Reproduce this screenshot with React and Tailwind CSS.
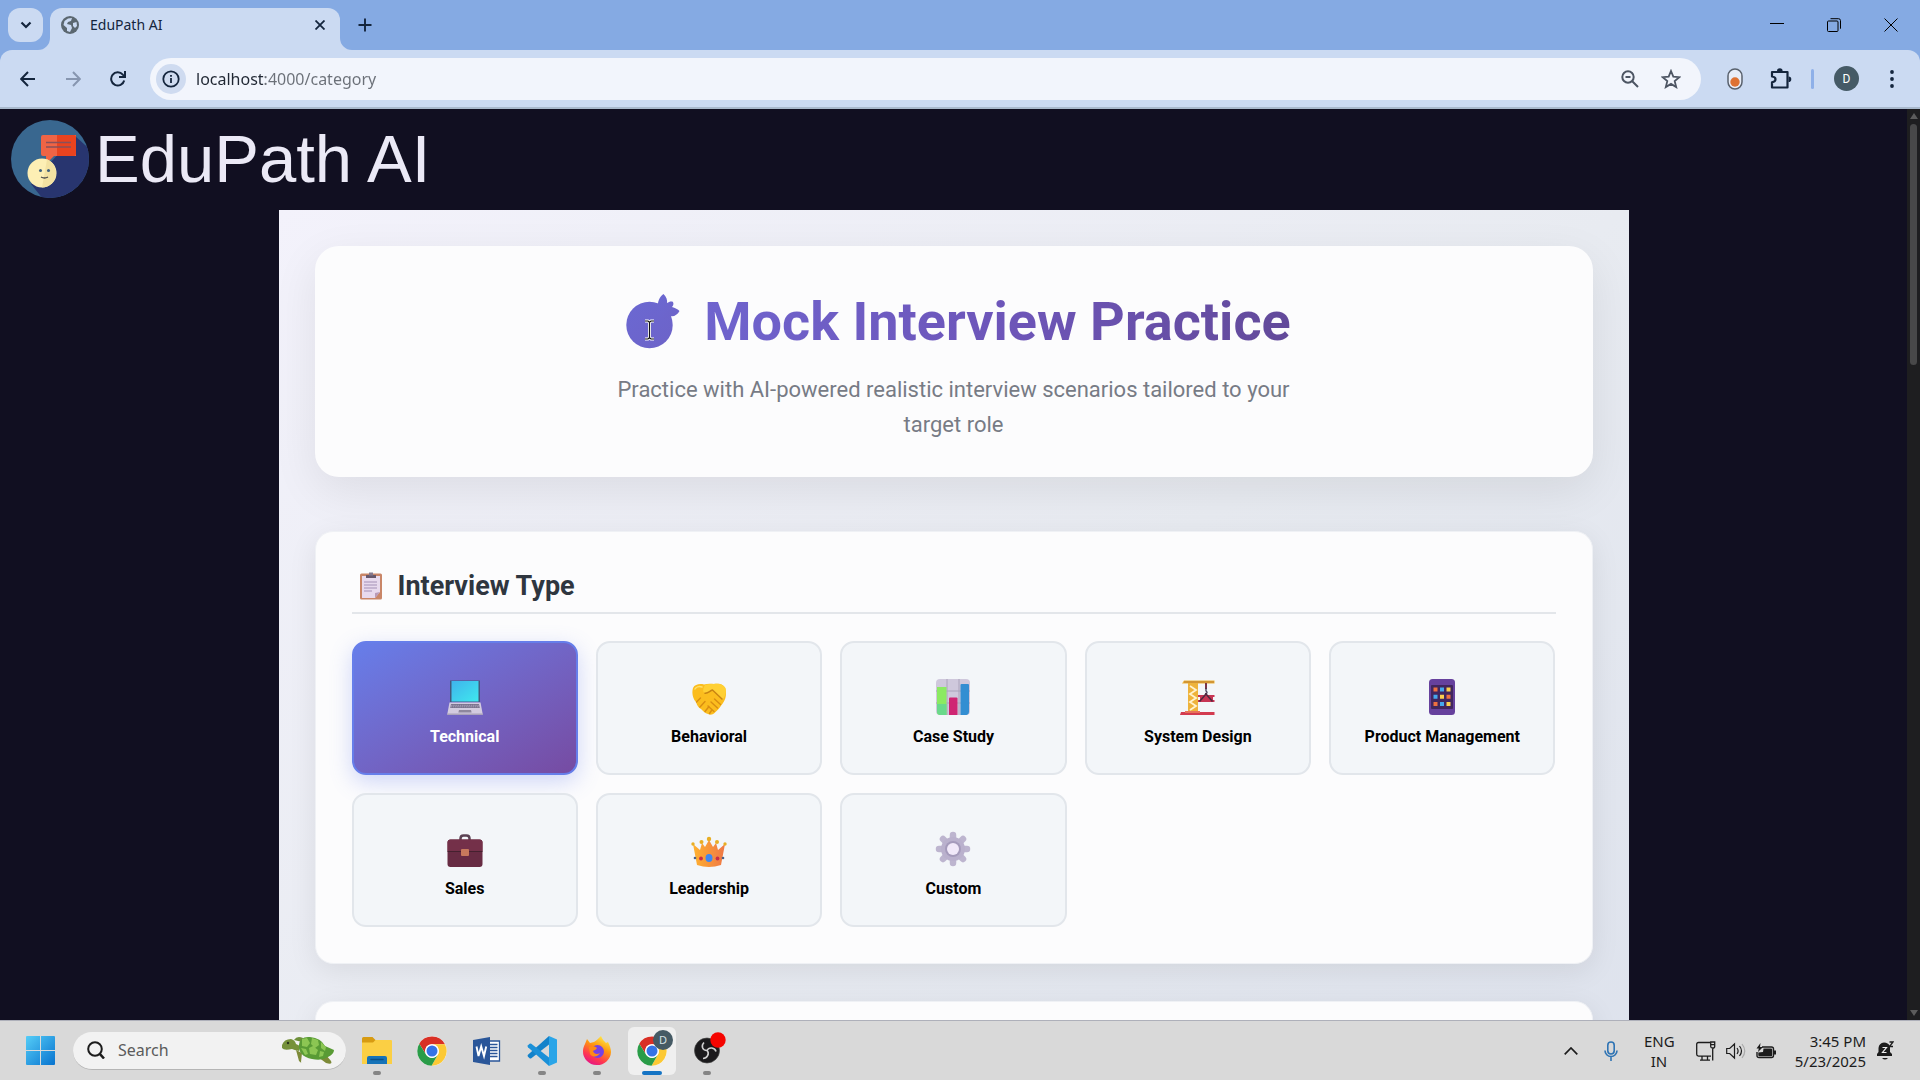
import { useState } from "react";

const LaptopIcon = () => (
  <svg viewBox="0 0 36 36" className="w-9 h-9">
    <defs>
      <linearGradient id="screen" x1="0" y1="0" x2="1" y2="1">
        <stop offset="0" stopColor="#3fb4ec" />
        <stop offset="1" stopColor="#3fe8ee" />
      </linearGradient>
    </defs>
    <path d="M3 1.500h30V23H3z" fill="#43597d" />
    <path d="M4.500 2H31.500v20.500H4.500z" fill="url(#screen)" />
    <path d="M2.500 23.500h31L35.800 35.500H.2z" fill="#d3cbdf" />
    <path d="M4 25h28l.8 4H3.200z" fill="#77708a" />
    <path d="M4 26.300h28M3.600 27.800h29" stroke="#bdb4cb" strokeWidth=".7" strokeDasharray="1.500 .7" />
    <path d="M12 31h12l.6 2.500H11.400z" fill="#8e879d" />
    <path d="M.2 34.500h35.600V36H.2z" fill="#aaa2ba" />
  </svg>
);

const HandshakeIcon = () => (
  <svg viewBox="0 0 36 36" className="w-9 h-9">
    <path d="M2 9c2-4 7-4.500 11-3.500 3-1 7-1 10-.5 5-1 10 0 11.500 5C36 17 34 22 30.500 26c-2 3-4 5.500-7 8-2 2-4.500 2-6.500 1-3-.5-5-3-7-5-3-1.500-4-4-5-7C2 20 .5 14 2 9z" fill="#fbbd1e" />
    <path d="M14 6c-2 3-2.500 7-.5 8 3 1 5-2 8-3l10 10c3-4 4-8 3-12-2-4-7-5-12-4-3-.3-6 0-8.500 1z" fill="#ffd034" />
    <path d="M13.500 14c3 1 5-2 8-3l10 9.500" fill="none" stroke="#c88412" strokeWidth="1.500" />
    <path d="M5.500 23l4-4M9 28l5-5.500M14 32.500l4-5M18.500 34.500l2-3M20 23l6.500 6M23.500 20l6 5.500M17 27l6 5.500" stroke="#d98e12" strokeWidth="1.400" strokeLinecap="round" />
    <path d="M4 10c1-2 4-3 7-2" stroke="#ffe06a" strokeWidth="1.500" fill="none" strokeLinecap="round" />
  </svg>
);

const ChartIcon = () => (
  <svg viewBox="0 0 36 36" className="w-9 h-9">
    <rect x="1" width="34" height="36" rx="4" fill="#cfc8dc" />
    <path d="M12 0v36M24 0v36M1 12h34M1 24h34" stroke="#aaa2ba" />
    <path d="M2 8h9.500v28H4.500Q2 35.500 2 33z" fill="#8bea62" />
    <path d="M2 25h9.500v11H4.500Q2 35.500 2 33z" fill="#6ad98b" />
    <path d="M14 19.500q0-1 1-1h6.500q1 0 1 1V36H14z" fill="#cf2573" />
    <path d="M25.500 6q0-1 1-1H33q1 0 1 1v27q0 2.500-2.500 3h-6z" fill="#338ed2" />
  </svg>
);

const CraneIcon = () => (
  <svg viewBox="0 0 36 36" className="w-9 h-9">
    <path d="M4 1.500h30.500v3H18v29H8v-29H2z" fill="#eeb33b" />
    <path d="M10 7l6 4-6 4 6 4-6 4 6 4-6 4" fill="none" stroke="#fff3cf" strokeWidth="1.800" />
    <path d="M4 3h30" stroke="#b6782c" />
    <path d="M26 4v6" stroke="#7a3547" strokeWidth="2" />
    <path d="M26 9v3c2 1 1 3-1 2.500" fill="none" stroke="#443b56" strokeWidth="1.300" />
    <path d="M18 16h16.500v2H33v3h1.500v2H18v-2h2v-3h-2z" fill="#c83554" />
    <path d="M19.500 22.500L26 15l6.500 7.500" fill="none" stroke="#512840" strokeWidth="1.600" />
    <path d="M1 33h33.500v3H0z" fill="#d33b50" />
    <path d="M5 32h15v2H5z" fill="#e8725a" />
  </svg>
);

const PhoneIcon = () => (
  <svg viewBox="0 0 36 36" className="w-9 h-9">
    <rect x="5" width="26" height="36" rx="3.500" fill="#66419d" />
    <rect x="7" y="6" width="22" height="24" rx="1" fill="#41265d" />
    <path d="M9.500 8.500h4v4h-4zM22.500 15.800h4v4h-4zM9.500 23h4v4h-4z" fill="#ee7040" />
    <path d="M16 8.500h4v4h-4zM9.500 15.800h4v4h-4zM16 23h4v4h-4z" fill="#45a8ed" />
    <path d="M22.500 8.500h4v4h-4zM16 15.800h4v4h-4zM22.500 23h4v4h-4z" fill="#fbd04d" />
  </svg>
);

const BriefcaseIcon = () => (
  <svg viewBox="0 0 36 36" className="w-9 h-9">
    <path d="M13.500 9V7.500q0-3 3-3h3q3 0 3 3V9" fill="none" stroke="#5b4253" strokeWidth="2.500" />
    <rect x=".5" y="8.500" width="35" height="27.500" rx="3" fill="#672b43" />
    <path d="M.5 11.500q0-3 3-3h29q3 0 3 3V20H.5z" fill="#743049" />
    <path d="M.5 20.500h35" stroke="#45202f" strokeWidth="1.200" />
    <rect x="14" y="18" width="8" height="7" rx="1" fill="#c7795c" />
  </svg>
);

const CrownIcon = () => (
  <svg viewBox="0 0 36 36" className="w-9 h-9">
    <defs>
      <linearGradient id="crown" x1="0" x2="1">
        <stop offset="0" stopColor="#ffb22f" />
        <stop offset="1" stopColor="#ef7747" />
      </linearGradient>
    </defs>
    <path d="M2 13l7 6 2-7 3 4 4-7 4 7 3-4 2 7 7-6-4 21q-12 4-24 0z" fill="url(#crown)" />
    <g fill="#e8ae24">
      <circle cx="2" cy="13" r="1.700" />
      <circle cx="10.500" cy="11" r="2" />
      <circle cx="18" cy="8" r="2.200" />
      <circle cx="26" cy="11" r="2" />
      <circle cx="34" cy="13" r="1.700" />
    </g>
    <ellipse cx="18" cy="27" rx="3.500" ry="4" fill="#3e87f1" />
    <circle cx="10" cy="27.500" r="1.900" fill="#c92d48" />
    <circle cx="26.500" cy="27.500" r="1.900" fill="#c92d48" />
    <circle cx="4" cy="27" r="1.300" fill="#4a5f86" />
    <circle cx="32" cy="27" r="1.300" fill="#4a5f86" />
  </svg>
);

const GearIcon = () => (
  <svg viewBox="0 0 36 36" className="w-9 h-9">
    <g stroke="#bdb5cf" strokeWidth="6.500" strokeLinecap="round">
      <path d="M18 4v28M4 18h28M8 8l20 20M28 8L8 28" />
    </g>
    <circle cx="18" cy="18" r="12" fill="#bab1cd" />
    <circle cx="18" cy="18" r="8" fill="#a59bbb" />
    <circle cx="18" cy="18" r="6" fill="#f1e9f9" />
  </svg>
);

const ClipboardIcon = () => (
  <svg viewBox="0 0 22 28" className="w-[22px] h-7">
    <rect y="1.500" width="22" height="26" rx="1.500" fill="#c98668" />
    <path d="M2 4h18v16l-5 6H2z" fill="#e8daee" />
    <path d="M20 20l-5 6v-5z" fill="#b99bb9" />
    <path d="M6 3h10v3H6z" fill="#66586d" />
    <path d="M9 .5h4v3H9z" fill="#85788c" />
    <path d="M4 10h13M4 13h13M4 16h13M4 19h8" stroke="#a48fb6" strokeWidth="1.200" />
  </svg>
);

const TitleIcon = () => (
  <svg viewBox="0 0 54 56" className="w-[54px] h-14">
    <defs>
      <linearGradient id="target" x1="0" y1="0" x2="1" y2="1">
        <stop offset="0" stopColor="#6b68d2" />
        <stop offset="1" stopColor="#6d63c8" />
      </linearGradient>
    </defs>
    <g fill="url(#target)">
      <circle cx="23.500" cy="31" r="23.200" />
      <path d="M32 14c-1-6 2-12 5.500-14 3 3 4 6 3.500 9 2-1 4-2 6-1 1 2 0 4-1 5 3 1 6 2 7.500 4-2 4-6 6-9 5l-6 4-8-6z" />
    </g>
    <path d="M19 27h3l1.500 1.200L25 27h3M19 45h3l1.500-1.200L25 45h3M23.500 28v16" fill="none" stroke="#fff" strokeWidth="3" />
    <path d="M19 27h3l1.500 1.200L25 27h3M19 45h3l1.500-1.200L25 45h3M23.500 28v16" fill="none" stroke="#111" strokeWidth="1.200" />
  </svg>
);

const LogoIcon = () => (
  <svg viewBox="0 0 78 78" className="w-[78px] h-[78px]">
    <clipPath id="logoClip">
      <circle cx="39" cy="39" r="39" />
    </clipPath>
    <g clipPath="url(#logoClip)">
      <path d="M0 0h78v78H0z" fill="#39678f" />
      <path d="M64 16l20 18v50H36L20 64l18-20z" fill="#28356f" />
      <path d="M32 15h33v21H43l-8 8v-8h-3q-2 0-2-2V17q0-2 2-2z" fill="#ef6445" />
      <path d="M46 15h17q2 0 2 2v17q0 2-2 2H46z" fill="#e9431f" />
      <path d="M35 22.500h25M35 27h25" stroke="#88505a" strokeWidth="1.500" />
      <circle cx="31" cy="53" r="14.500" fill="#fdefb4" />
      <path d="M36 39.500A14.500 14.500 0 0 1 31 67.500z" fill="#f3e2a2" />
      <circle cx="29.500" cy="50.500" r="1.500" fill="#41617c" />
      <circle cx="37.500" cy="50.500" r="1.500" fill="#41617c" />
      <path d="M30 57q3.500 2 7 0" fill="none" stroke="#4b4b4b" strokeWidth="1.300" />
    </g>
  </svg>
);

const ChromeLogo = () => (
  <svg viewBox="0 0 48 48" className="w-[30px] h-[30px]">
    <circle cx="24" cy="24" r="23.500" fill="#fff" />
    <path d="M24 13h20.800A23.700 23.700 0 0 0 3.600 12.200L14.500 29.500A11 11 0 0 1 24 13z" fill="#d93025" />
    <path d="M44.700 13H24a11 11 0 0 1 9.500 16.500L23.300 47.700A23.700 23.700 0 0 0 44.700 13z" fill="#fcc934" />
    <path d="M33.500 29.500a11 11 0 0 1-19 0L3.600 12.200a23.700 23.700 0 0 0 19.700 35.500z" fill="#2a9c48" />
    <circle cx="24" cy="24" r="11" fill="#fff" />
    <circle cx="24" cy="24" r="8.800" fill="#3573e6" />
  </svg>
);

const FolderLogo = () => (
  <svg viewBox="0 0 30 28" className="w-[30px] h-7">
    <path d="M1.500 0h9l3 3H29v8H0V1.500Q0 0 1.500 0z" fill="#d79b12" />
    <path d="M0 5.500h11L13.500 3H29q1 0 1 1v23H0z" fill="#fbcf44" />
    <path d="M5 27v-6q0-2 2-2h16q2 0 2 2v6z" fill="#1673b8" />
    <path d="M9 22.500h12" stroke="#0b4f86" strokeWidth="1.500" strokeLinecap="round" />
  </svg>
);

const WordLogo = () => (
  <svg viewBox="0 0 28 28" className="w-7 h-7">
    <path d="M14 4h12.500v20H14z" fill="#fff" stroke="#2a5699" strokeWidth="1.300" />
    <path d="M17 7.500h7.500M17 10.500h7.500M17 13.500h7.500M17 16.500h7.500M17 19.500h7.500" stroke="#2a5699" strokeWidth="1.500" />
    <path d="M0 3l17-3v28L0 25z" fill="#2a5699" />
    <path d="M3.500 9.500l2 9.500 2.700-9.500L11 19l2.200-9.500" fill="none" stroke="#fff" strokeWidth="1.900" />
  </svg>
);

const CodeLogo = () => (
  <svg viewBox="0 0 30 30" className="w-[30px] h-[30px]">
    <path d="M22 0l8 3.500v23L22 30z" fill="#2aa5e8" />
    <path d="M22 0L1 18.800q-1 1 0 2l1.600 1.400q.8.600 1.700 0L22 8.500z" fill="#1382ca" />
    <path d="M22 30L1 11.200q-1-1 0-2l1.600-1.400q.8-.6 1.700 0L22 21.500z" fill="#1a90d8" />
  </svg>
);

const FirefoxLogo = () => (
  <svg viewBox="0 0 30 30" className="w-[30px] h-[30px]">
    <defs>
      <linearGradient id="fox" x1=".8" y1="0" x2=".3" y2="1">
        <stop offset="0" stopColor="#fff44f" />
        <stop offset=".4" stopColor="#ff980e" />
        <stop offset=".75" stopColor="#ff3750" />
        <stop offset="1" stopColor="#e31587" />
      </linearGradient>
    </defs>
    <path d="M3 8l2-5 3 4 4-1c2-1 4-3 7-6 1 3 3 5 5 7l2-1c2 4 3 7 3 10A14 13.500 0 1 1 1 15c0-3 1-5 2-7z" fill="url(#fox)" />
    <circle cx="15.500" cy="15.500" r="6.500" fill="#7542e5" />
    <path d="M7 11c3-1 6-1 8 1-1 2-3 2-4 3 1 3 4 4 7 2-2 4-7 5-10 1z" fill="#ff8a16" />
  </svg>
);

const ObsLogo = () => (
  <svg viewBox="-6 0 38 38" className="w-[38px] h-[38px]">
    <circle cx="13" cy="18.500" r="12.500" fill="#1b1a1c" stroke="#444" strokeWidth=".7" />
    <path d="M13 18.500c-5 0-6-5-3-8M13 18.500c2-4 8-3 9 1M13 18.500c3 3 0 8-4 8" fill="none" stroke="#d0d0d0" strokeWidth="1.600" />
    <circle cx="24" cy="8" r="7.700" fill="#f50400" />
  </svg>
);

const TurtleIcon = () => (
  <svg viewBox="0 0 54 30" className="w-[54px] h-[30px]">
    <path d="M14 15l3 11q3 3 2 1l1-9zM36 22l8 6q7 2 5-2l-5-6z" fill="#7d8a38" />
    <path d="M12 5q3-5 9-2l-1 4z" fill="#6e8f39" />
    <path d="M0 10q2-6 9-6 4 1 5 5l4 2-1 5q-5-1-7-2-8 2-10-1z" fill="#76913b" />
    <circle cx="6" cy="8" r="1.200" fill="#28331c" />
    <path d="M17 10q1-9 11-8 11 1 15 9l9 4q0 4-6 7-6 4-16 2-14-3-13-14z" fill="#599b35" />
    <path d="M20 4l5-1 3 5-3 4-5-1zM30 3l6 2 1 5-4 3-4-4zM39 7l5 5-1 4-4-3zM19 13l5 1 2 5-3 1zM27 13l4-2 5 4-2 5-6-1zM38 16l4 1-1 4-4 1z" fill="#8cc653" />
  </svg>
);

const interviewTypes = [
  { id: "technical", label: "Technical", icon: LaptopIcon },
  { id: "behavioral", label: "Behavioral", icon: HandshakeIcon },
  { id: "case-study", label: "Case Study", icon: ChartIcon },
  { id: "system-design", label: "System Design", icon: CraneIcon },
  { id: "product", label: "Product Management", icon: PhoneIcon },
  { id: "sales", label: "Sales", icon: BriefcaseIcon },
  { id: "leadership", label: "Leadership", icon: CrownIcon },
  { id: "custom", label: "Custom", icon: GearIcon },
];

const BrowserBar = () => (
  <header className="shrink-0 bg-[#85aae3] text-[#14253d]">
    <div className="flex h-[50px] pl-2">
      <button aria-label="Search tabs" className="mt-2 flex h-[34px] w-[35px] items-center justify-center rounded-xl bg-[#cbdaf2]">
        <svg viewBox="0 0 12 8" className="w-3 h-2" fill="none" stroke="currentColor" strokeWidth="2.200">
          <path d="M1.500 1.500L6 6l4.500-4.500" />
        </svg>
      </button>
      <div className="relative ml-[7px] mt-2 flex w-[290px] items-center rounded-t-xl bg-[#cbdaf2] pb-2 pl-[11px] pr-[15px]">
        <svg viewBox="0 0 18 18" className="w-[18px] h-[18px]">
          <circle cx="9" cy="9" r="9" fill="#5b6770" />
          <path d="M7 2.500l4-.5-1 3-3 1-1 2 4 1 1 3-2 4-3-1v-3L2.500 9l1-4zM12 7l3.500-1 .5 4-2 2-2-2z" fill="#cbdaf2" />
        </svg>
        <span className="ml-[11px] flex-1 text-[14px] leading-5">EduPath AI</span>
        <button aria-label="Close tab">
          <svg viewBox="0 0 10 10" className="w-2.5 h-2.5" stroke="currentColor" strokeWidth="1.800">
            <path d="M.5.5l9 9M9.500.5l-9 9" />
          </svg>
        </button>
        <svg viewBox="0 0 12 12" className="absolute -left-3 bottom-0 w-3 h-3">
          <path d="M12 0v12H0A12 12 0 0 0 12 0z" fill="#cbdaf2" />
        </svg>
        <svg viewBox="0 0 12 12" className="absolute -right-3 bottom-0 w-3 h-3">
          <path d="M0 0v12h12A12 12 0 0 1 0 0z" fill="#cbdaf2" />
        </svg>
      </div>
      <button aria-label="New tab" className="ml-[18px]">
        <svg viewBox="0 0 14 14" className="w-3.5 h-3.5" stroke="currentColor" strokeWidth="1.900">
          <path d="M7 .5v13M.5 7h13" />
        </svg>
      </button>
      <div className="ml-auto flex items-center gap-[43px] pr-[22px] text-black">
        <button aria-label="Minimize">
          <svg viewBox="0 0 14 14" className="w-3.5 h-3.5" stroke="currentColor">
            <path d="M0 5.500h14" />
          </svg>
        </button>
        <button aria-label="Restore">
          <svg viewBox="0 0 14 14" className="w-3.5 h-3.5" fill="none" stroke="currentColor">
            <rect x=".5" y="3" width="10.500" height="10.500" rx="1" />
            <path d="M3.500.7h8q2 0 2 2v8" />
          </svg>
        </button>
        <button aria-label="Close">
          <svg viewBox="0 0 14 14" className="w-3.5 h-3.5" stroke="currentColor">
            <path d="M.5.5l13 13M13.500.5l-13 13" />
          </svg>
        </button>
      </div>
    </div>

    <div className="flex h-[59px] items-center rounded-t-xl border-b-2 border-[#a9b9cd] bg-[#cbdaf2] pl-5 pr-[26px]">
      <div className="flex items-center gap-[29px]">
        <button aria-label="Back">
          <svg viewBox="0 0 16 16" className="w-4 h-4" fill="none" stroke="currentColor" strokeWidth="2">
            <path d="M15 8H1.500M8 1L1.200 8 8 15" />
          </svg>
        </button>
        <button aria-label="Forward" className="text-[#8796b0]">
          <svg viewBox="0 0 16 16" className="w-4 h-4" fill="none" stroke="currentColor" strokeWidth="2">
            <path d="M1 8h13.500M8 1l6.800 7L8 15" />
          </svg>
        </button>
        <button aria-label="Reload">
          <svg viewBox="0 0 16 16" className="w-4 h-4" fill="none" stroke="currentColor" strokeWidth="2">
            <path d="M14.200 9.500A6.600 6.600 0 1 1 12.800 3.600L15 6M15 0v6H9" />
          </svg>
        </button>
      </div>
      <div className="ml-6 flex h-[42px] flex-1 items-center rounded-full bg-[#f2f5fc] pl-1.5 pr-5">
        <button aria-label="Site information" className="flex h-[30px] w-[30px] items-center justify-center rounded-full bg-[#cfdbf0]">
          <svg viewBox="0 0 18 18" className="w-[18px] h-[18px]" fill="none" stroke="currentColor" strokeWidth="1.800">
            <circle cx="9" cy="9" r="7.700" />
            <path d="M9 8v5M9 5v1.800" />
          </svg>
        </button>
        <input
          aria-label="Address"
          defaultValue="localhost:4000/category"
          className="ml-[10px] h-7 min-w-0 flex-1 bg-[linear-gradient(to_right,#202733_69px,#6b7078_69px)] bg-clip-text text-[16px] text-transparent outline-none"
        />
        <div className="flex items-center gap-[22px] text-[#4d5563]">
          <button aria-label="Zoom">
            <svg viewBox="0 0 18 18" className="w-[18px] h-[18px]" fill="none" stroke="currentColor" strokeWidth="2">
              <circle cx="7" cy="7" r="5.700" />
              <path d="M11 11l6 6M4.500 7h5" />
            </svg>
          </button>
          <button aria-label="Bookmark this tab">
            <svg viewBox="0 0 20 20" className="w-5 h-5" fill="none" stroke="currentColor" strokeWidth="1.800">
              <path d="M10 2l2.300 5.700 6 .5-4.600 3.900 1.500 6L10 14.900l-5.200 3.200 1.500-6L1.700 8.200l6-.5z" />
            </svg>
          </button>
        </div>
      </div>
      <div className="ml-[26px] flex items-center">
        <button aria-label="Toggle extension">
          <svg viewBox="0 0 16 22" className="w-4 h-[22px]">
            <rect x="1" y="1" width="14" height="20" rx="7" fill="#e8edf8" stroke="#59616d" strokeWidth="1.500" />
            <circle cx="8" cy="14" r="4.700" fill="#de7132" />
          </svg>
        </button>
        <button aria-label="Extensions" className="ml-[27px]">
          <svg viewBox="0 0 22 22" className="w-[22px] h-[22px]">
            <path d="M2 4h15.500v15.500H2v-5.200q3.500-.5 3.500-3T2 8.500z" fill="none" stroke="currentColor" strokeWidth="2.200" strokeLinejoin="round" />
            <path d="M7 3a2.800 2.800 0 0 1 5.600 0zM18.500 8.500a2.800 2.800 0 0 1 0 5.600z" fill="currentColor" />
          </svg>
        </button>
        <span className="ml-[19px] h-5 w-[3px] rounded bg-[#8fb0e8]" />
        <button aria-label="Profile" className="ml-5 flex h-[25px] w-[25px] items-center justify-center rounded-full bg-[#455a66] font-[Roboto] text-[12px] text-white">
          D
        </button>
        <button aria-label="Menu" className="ml-[31px]">
          <svg viewBox="0 0 4 18" className="w-1 h-[18px]" fill="currentColor">
            <circle cx="2" cy="2" r="1.900" />
            <circle cx="2" cy="9" r="1.900" />
            <circle cx="2" cy="16" r="1.900" />
          </svg>
        </button>
      </div>
    </div>
  </header>
);

const CategoryPage = () => {
  const [selected, setSelected] = useState("technical");

  return (
    <main className="min-w-0 flex-1 overflow-hidden bg-[#110f21] font-[Roboto,sans-serif]">
      <a href="#home" className="flex h-[101px] items-center gap-1.5 pb-0.5 pl-[11px] font-['Liberation_Sans',Arial,sans-serif] text-[67px] leading-[76px] text-[#ebe9f6]">
        <LogoIcon />
        EduPath AI
      </a>

      <div className="mx-auto max-w-[1350px] bg-linear-to-br from-[#f3f2fb] via-[#e8ebf1] to-[#dce1ec] p-9">
        <section className="rounded-3xl bg-[#fcfcfd] px-9 pb-[35px] pt-9 text-center shadow-[0_14px_45px_rgba(0,0,0,0.08)]">
          <div className="mb-2.5 flex items-center justify-center gap-6 bg-[linear-gradient(100deg,#7069d6_20%,#6d55b8_55%,#5f4690_85%)] bg-clip-text pl-[10px] text-[54px] font-bold leading-[80px] text-transparent">
            <TitleIcon />
            <h1>Mock Interview Practice</h1>
          </div>
          <p className="mx-auto max-w-[675px] text-[22px] leading-[35px] text-[#777b85]">
            Practice with AI-powered realistic interview scenarios tailored to your target role
          </p>
        </section>

        <section className="mt-[54px] rounded-[18px] border border-[#eff1f5] bg-[#fcfcfd] p-9 shadow-[0_7px_29px_rgba(0,0,0,0.08)]">
          <h2 className="mb-[27px] flex items-center gap-4 border-b-2 border-[#e3e6ea] pb-2 pl-2 text-[27px] font-bold leading-9 text-[#2f363f]">
            <ClipboardIcon />
            Interview Type
          </h2>
          <div className="grid grid-cols-5 gap-[18px]">
            {interviewTypes.map(({ id, label, icon: Icon }) => (
              <button
                key={id}
                onClick={() => setSelected(id)}
                aria-pressed={selected === id}
                className={
                  selected === id
                    ? "flex h-[134px] flex-col items-center justify-center gap-2.5 rounded-[14px] border-2 border-[#667eea] bg-linear-to-br from-[#667eea] to-[#764ba2] pt-0.5 text-white shadow-[0_7px_22px_rgba(102,126,234,0.3)]"
                    : "flex h-[134px] flex-col items-center justify-center gap-2.5 rounded-[14px] border-2 border-[#e2e6eb] bg-[#f3f6f9] pt-0.5 text-black"
                }
              >
                <span className="flex h-[46px] items-end">
                  <Icon />
                </span>
                <span className="text-[16px] font-bold leading-6">{label}</span>
              </button>
            ))}
          </div>
        </section>

        <section className="mt-[37px] h-40 rounded-[18px] border border-[#eff1f5] bg-[#fcfcfd] shadow-[0_7px_29px_rgba(0,0,0,0.08)]" />
      </div>
    </main>
  );
};

const ScrollBar = () => (
  <div className="flex w-[13px] shrink-0 flex-col items-center bg-[#1e1e20] py-1">
    <svg viewBox="0 0 8 6" className="w-2 h-1.5" fill="#5c5c5c">
      <path d="M4 0l4 6H0z" />
    </svg>
    <div className="mt-[5px] h-[241px] w-[7px] rounded-full bg-[#484849]" />
    <svg viewBox="0 0 8 6" className="mt-auto w-2 h-1.5" fill="#5c5c5c">
      <path d="M4 6L0 0h8z" />
    </svg>
  </div>
);

const taskbarApps = [
  { name: "File Explorer", icon: FolderLogo, running: true },
  { name: "Google Chrome", icon: ChromeLogo, running: false },
  { name: "Word", icon: WordLogo, running: false },
  { name: "Visual Studio Code", icon: CodeLogo, running: true },
  { name: "Firefox", icon: FirefoxLogo, running: true },
  { name: "Chrome profile D", icon: ChromeLogo, active: true },
  { name: "OBS Studio", icon: ObsLogo, running: true },
];

const Taskbar = () => (
  <footer className="flex h-[60px] shrink-0 items-center border-t border-[#aeb0ba] bg-[#d9d9d9] pl-[26px] pr-[26px] text-[#1c1c1c]">
    <button aria-label="Start">
      <svg viewBox="0 0 29 29" className="w-[29px] h-[29px]">
        <defs>
          <linearGradient id="win" x1="0" y1="0" x2="1" y2="1">
            <stop offset="0" stopColor="#55cdf7" />
            <stop offset="1" stopColor="#0873cf" />
          </linearGradient>
        </defs>
        <path d="M1 0h13v14H0V1q0-1 1-1zM15 0h13q1 0 1 1v13H15zM0 15h14v14H1q-1 0-1-1zM15 15h14v13q0 1-1 1H15z" fill="url(#win)" />
      </svg>
    </button>
    <label className="ml-[18px] flex h-[38px] w-[273px] items-center rounded-full border-b border-[#b5b5b5] bg-[#f2f2f2] pl-3.5 pr-[10px]">
      <svg viewBox="0 0 18 18" className="w-[18px] h-[18px] shrink-0" fill="none" stroke="#1c1c1c" strokeWidth="2">
        <circle cx="8" cy="8" r="6.800" />
        <path d="M12.800 12.800L17 17.500" strokeWidth="2.500" />
      </svg>
      <input aria-label="Search" placeholder="Search" className="ml-[13px] min-w-0 flex-1 bg-transparent text-[16px] outline-none placeholder:text-[#5b5b5b]" />
      <TurtleIcon />
    </label>
    <nav className="ml-[7px] flex gap-[7px]">
      {taskbarApps.map(({ name, icon: Icon, running, active }) => (
        <button
          key={name}
          aria-label={name}
          className={
            active
              ? "relative flex h-12 w-12 items-center justify-center rounded-md bg-[#efefef]"
              : "relative flex h-12 w-12 items-center justify-center rounded-md"
          }
        >
          <Icon />
          {running && <span className="absolute bottom-0 left-5 h-1 w-2 rounded-full bg-[#858585]" />}
          {active && <span className="absolute bottom-0 left-3.5 h-1 w-5 rounded-full bg-[#1574c4]" />}
          {active && (
            <span className="absolute right-[3px] top-[3px] flex h-5 w-5 items-center justify-center rounded-full bg-[#455a64] text-[11px] leading-5 text-[#d6e0e5]">
              D
            </span>
          )}
        </button>
      ))}
    </nav>

    <div className="ml-auto flex items-center">
      <button aria-label="Show hidden icons">
        <svg viewBox="0 0 14 8" className="w-3.5 h-2" fill="none" stroke="currentColor" strokeWidth="1.700">
          <path d="M.7 7.300L7 1l6.300 6.300" />
        </svg>
      </button>
      <svg viewBox="0 0 14 20" className="ml-[26px] w-3.5 h-5" fill="none" stroke="#2f74b4" strokeWidth="1.600">
        <rect x="3.800" y="1" width="6.400" height="12" rx="3.200" />
        <path d="M1 9.500a6 6 0 0 0 12 0M7 15.800V20" />
      </svg>
      <div className="ml-[26px] w-[30px] text-center text-[15px] leading-5">
        ENG
        <br />
        IN
      </div>
      <svg viewBox="0 0 20 20" className="ml-[22px] w-5 h-5" fill="none" stroke="currentColor" strokeWidth="1.300">
        <path d="M14 1.500H2.500q-1.800 0-1.800 1.800v10q0 1.800 1.800 1.800H15M6 15v4M11.500 15v4M4 19.200h10" />
        <path d="M14.700 1h4v4.500q0 1.500-2 1.500t-2-1.500zM14.700 3.700h4M16.700 7v12.500" />
      </svg>
      <svg viewBox="0 0 20 18" className="ml-[10px] w-5 h-[18px]" fill="none" stroke="currentColor" strokeWidth="1.200">
        <path d="M.7 6.500h3l4.800-4.500v14L3.700 11.500h-3zM11 6q2.200 3 0 6M13.500 4q4 5 0 10" />
        <path d="M16 2q5.500 7 0 14" stroke="#aaa" />
      </svg>
      <svg viewBox="0 0 20 16" className="ml-[10px] w-5 h-4">
        <path d="M6 4h9.500q2 0 2 2v6.500q0 2-2 2H3q-2 0-2-2V9" fill="none" stroke="currentColor" strokeWidth="1.400" />
        <path d="M7.500 5.500H15q1.200 0 1.200 1v5.500q0 1.200-1 1.200H3.500q-1.200 0-1.200-1.200V9.500L7 9zM18 7.500h2v4h-2zM4.500 0L.5 5.500h2.300L2 9l5-5H4z" fill="currentColor" />
      </svg>
      <div className="ml-5 w-[70px] whitespace-nowrap text-[15px] leading-5">
        <div className="flex justify-end">3:45 PM</div>
        <div className="flex justify-end">5/23/2025</div>
      </div>
      <svg viewBox="0 0 18 20" className="ml-[10px] w-[18px] h-5">
        <path d="M1 13l1.500-2V7q.5-5 5.500-5.500Q12 1.500 14 5v6l2 2v2H1zM6 17h6q-3 3-6 0z" fill="currentColor" />
        <path d="M6.500 6.500h4l-4 5h4" fill="none" stroke="#eee" strokeWidth="1.200" />
        <path d="M13.500 1h3.500l-3.500 4.500h3.500" fill="none" stroke="currentColor" strokeWidth="1.300" />
      </svg>
    </div>
  </footer>
);

export default function App() {
  return (
    <div className="flex h-screen flex-col overflow-hidden font-['Noto_Sans',sans-serif]">
      <BrowserBar />
      <div className="flex min-h-0 flex-1">
        <CategoryPage />
        <ScrollBar />
      </div>
      <Taskbar />
    </div>
  );
}
